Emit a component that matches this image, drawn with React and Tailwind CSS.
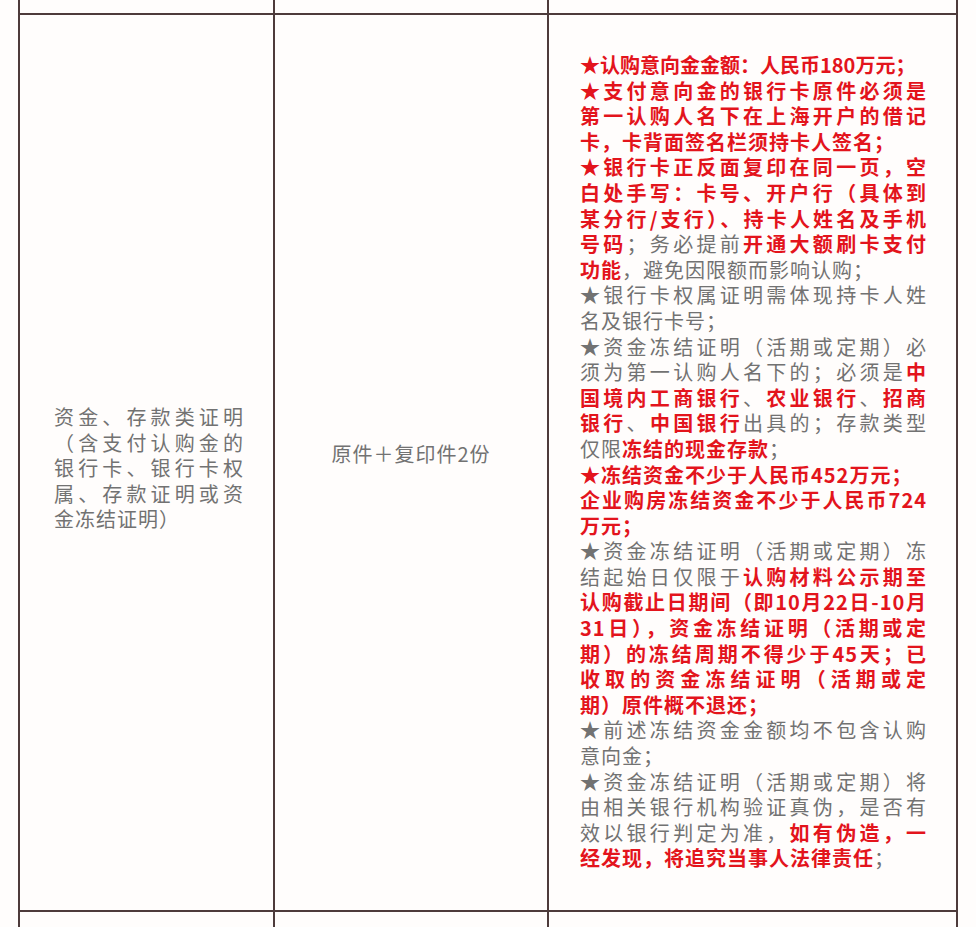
const R = "r";
const G = "g";

// 右栏说明文字，按截图逐行断开
const notes = [
  { s: [["★认购意向金金额：人民币180万元；", R]], end: true, cls: "tracking-[0px]" },
  { s: [["★支付意向金的银行卡原件必须是", R]] },
  { s: [["第一认购人名下在上海开户的借记", R]] },
  { s: [["卡，卡背面签名栏须持卡人签名；", R]], end: true },
  { s: [["★银行卡正反面复印在同一页，空", R]] },
  { s: [["白处手写：卡号、开户行（具体到", R]] },
  { s: [["某分行/支行）、持卡人姓名及手机", R]] },
  { s: [["号码", R], ["；务必提前", G], ["开通大额刷卡支付", R]] },
  { s: [["功能", R], ["，避免因限额而影响认购；", G]], end: true },
  { s: [["★银行卡权属证明需体现持卡人姓", G]] },
  { s: [["名及银行卡号；", G]], end: true },
  { s: [["★资金冻结证明（活期或定期）必", G]] },
  { s: [["须为第一认购人名下的；必须是", G], ["中", R]] },
  { s: [["国境内工商银行", R], ["、", G], ["农业银行", R], ["、", G], ["招商", R]] },
  { s: [["银行", R], ["、", G], ["中国银行", R], ["出具的；存款类型", G]] },
  { s: [["仅限", G], ["冻结的现金存款", R], ["；", G]], end: true },
  { s: [["★冻结资金不少于人民币452万元；", R]], end: true },
  { s: [["企业购房冻结资金不少于人民币724", R]] },
  { s: [["万元；", R]], end: true },
  { s: [["★资金冻结证明（活期或定期）冻", G]] },
  { s: [["结起始日仅限于", G], ["认购材料公示期至", R]] },
  { s: [["认购截止日期间（即10月22日-10月", R]] },
  { s: [["31日），资金冻结证明（活期或定", R]] },
  { s: [["期）的冻结周期不得少于45天；已", R]] },
  { s: [["收取的资金冻结证明（活期或定", R]] },
  { s: [["期）原件概不退还；", R]], end: true },
  { s: [["★前述冻结资金金额均不包含认购", G]] },
  { s: [["意向金；", G]], end: true },
  { s: [["★资金冻结证明（活期或定期）将", G]] },
  { s: [["由相关银行机构验证真伪，是否有", G]] },
  { s: [["效以银行判定为准，", G], ["如有伪造，一", R]] },
  { s: [["经发现，将追究当事人法律责任", R], ["；", G]], end: true },
];

const title = [
  "资金、存款类证明",
  "（含支付认购金的",
  "银行卡、银行卡权",
  "属、存款证明或资",
  "金冻结证明）",
];

function Line({ children, end, className = "" }) {
  return (
    <div
      className={`whitespace-nowrap ${
        end ? "text-left" : "text-justify [text-align-last:justify]"
      } ${className}`}
    >
      {children}
    </div>
  );
}

function EdgeRow({ height }) {
  return (
    <div className={`grid grid-cols-[255px_274px_407px] ${height}`}>
      <div className="border-r-2 border-[#4d3b3b]" />
      <div className="border-r-2 border-[#4d3b3b]" />
      <div />
    </div>
  );
}

export default function App() {
  return (
    <div className="min-h-[927px] bg-[#fffdfc] pl-[18px] font-['Noto_Sans_CJK_SC','Noto_Sans',sans-serif] text-[20px] tracking-[1px]">
      <div className="w-[940px] border-x-2 border-[#4d3b3b]">
        <EdgeRow height="h-[13px]" />

        <div className="grid grid-cols-[255px_274px_407px] border-y-2 border-[#4d3b3b]">
          {/* 材料名称 */}
          <div className="flex items-center border-r-2 border-[#4d3b3b] pl-[34px] pt-[11px]">
            <div className="w-[190px] leading-[25.5px] text-[#727272]">
              {title.map((t, i) => (
                <Line key={i} end={i === title.length - 1}>
                  {t}
                </Line>
              ))}
            </div>
          </div>

          {/* 份数 */}
          <div className="flex items-center justify-center border-r-2 border-[#4d3b3b] pb-[18px] text-[#727272]">
            原件＋复印件2份
          </div>

          {/* 说明 */}
          <div className="pl-[31px] pt-[37px] pb-[39px]">
            <div className="w-[347px] leading-[25.6px]">
              {notes.map((line, i) => (
                <Line key={i} end={line.end} className={line.cls}>
                  {line.s.map(([text, c], j) => (
                    <span
                      key={j}
                      className={
                        c === R
                          ? "font-bold text-[#e3141c]"
                          : "text-[#727272]"
                      }
                    >
                      {text}
                    </span>
                  ))}
                </Line>
              ))}
            </div>
          </div>
        </div>

        <EdgeRow height="h-[15px]" />
      </div>
    </div>
  );
}
